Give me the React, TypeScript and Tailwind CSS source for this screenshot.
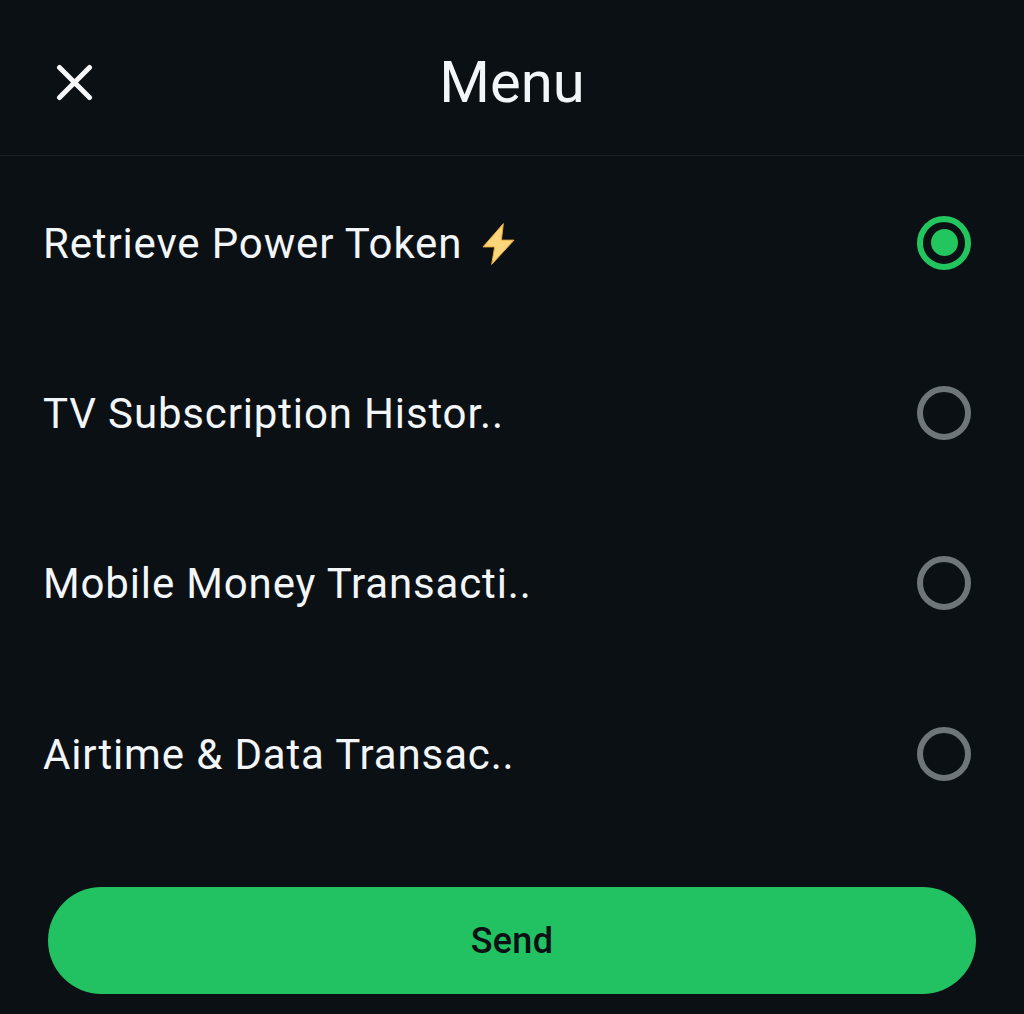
const options = [
  { label: 'Retrieve Power Token', bolt: true, selected: true },
  { label: 'TV Subscription Histor..' },
  { label: 'Mobile Money Transacti..' },
  { label: 'Airtime & Data Transac..' },
];

const Bolt = () => (
  <svg viewBox="0 0 34 44" className="ml-[20px] h-[44px] w-[33px]" aria-hidden="true">
    <path d="M22 1 L1 25 L13 25 L10 43 L33 18 L20 18 Z" fill="#fcd67a" stroke="#e9a63a" strokeWidth="1" strokeLinejoin="round" />
  </svg>
);

export default function App() {
  return (
    <div className="flex h-[1014px] w-full flex-col bg-[#0b1014] font-['Roboto',sans-serif] text-[#f3f6f8]">
      {/* Header */}
      <header className="relative flex h-[156px] flex-none items-center justify-center border-b border-[#1b2024]">
        <button type="button" className="absolute left-[56px] top-[64px] h-[37px] w-[37px]">
          <svg viewBox="0 0 37 37" className="h-full w-full" aria-hidden="true">
            <path d="M3.5 3.5 L33.5 33.5 M33.5 3.5 L3.5 33.5" fill="none" stroke="#f6f8fa" strokeWidth="5" strokeLinecap="round" />
          </svg>
        </button>
        <h1 className="pt-[9px] text-[58px] leading-none">Menu</h1>
      </header>

      {/* Options */}
      <ul className="flex flex-col pt-[1.5px]">
        {options.map((option) => (
          <li key={option.label} className="flex h-[170.4px] items-center justify-between pl-[43px] pr-[53px]">
            <span className="flex items-center pt-[2px] text-[42px] leading-none tracking-[0.85px]">
              {option.label}
              {option.bolt && <Bolt />}
            </span>
            {option.selected ? (
              <span className="flex h-[54px] w-[54px] items-center justify-center rounded-full border-[6px] border-[#22c55e]">
                <span className="h-[27px] w-[27px] rounded-full bg-[#22c55e]" />
              </span>
            ) : (
              <span className="h-[54px] w-[54px] rounded-full border-[6px] border-[#6f767a]" />
            )}
          </li>
        ))}
      </ul>

      {/* Send */}
      <div className="px-[48px] pt-[47.5px]">
        <button type="button" className="flex h-[107px] w-full items-center justify-center rounded-full bg-[#22c162] pt-[2px] text-[36px] font-medium tracking-[0.3px] text-[#0b1014]">
          Send
        </button>
      </div>
    </div>
  );
}
